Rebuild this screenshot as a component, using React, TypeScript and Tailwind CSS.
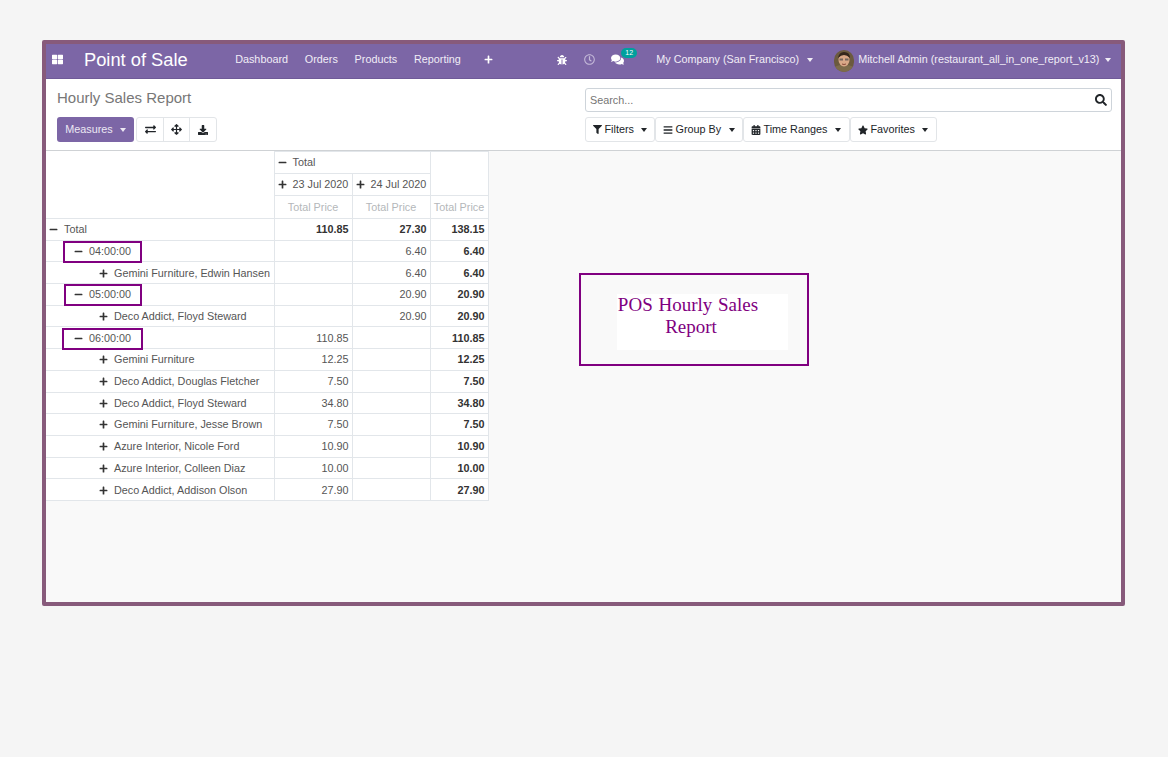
import { FaThLarge, FaPlus, FaMinus, FaExchangeAlt, FaArrowsAlt, FaDownload, FaBug, FaRegClock, FaComments, FaFilter, FaBars, FaCalendarAlt, FaStar, FaSearch } from 'react-icons/fa';

const navLinks = ['Dashboard', 'Orders', 'Products', 'Reporting'];

const rows = [
  { label: 'Total', level: 0, open: true, a: '110.85', b: '27.30', t: '138.15', bold: true },
  { label: '04:00:00', level: 1, open: true, a: '', b: '6.40', t: '6.40', box: 'w-[79px] top-0 h-[22px]' },
  { label: 'Gemini Furniture, Edwin Hansen', level: 2, a: '', b: '6.40', t: '6.40' },
  { label: '05:00:00', level: 1, open: true, a: '', b: '20.90', t: '20.90', box: 'w-[78px] ml-[1px] top-0 h-[22px]' },
  { label: 'Deco Addict, Floyd Steward', level: 2, a: '', b: '20.90', t: '20.90' },
  { label: '06:00:00', level: 1, open: true, a: '110.85', b: '', t: '110.85', box: 'w-[81px] -ml-[1px] top-[1px] h-[22px]' },
  { label: 'Gemini Furniture', level: 2, a: '12.25', b: '', t: '12.25' },
  { label: 'Deco Addict, Douglas Fletcher', level: 2, a: '7.50', b: '', t: '7.50' },
  { label: 'Deco Addict, Floyd Steward', level: 2, a: '34.80', b: '', t: '34.80' },
  { label: 'Gemini Furniture, Jesse Brown', level: 2, a: '7.50', b: '', t: '7.50' },
  { label: 'Azure Interior, Nicole Ford', level: 2, a: '10.90', b: '', t: '10.90' },
  { label: 'Azure Interior, Colleen Diaz', level: 2, a: '10.00', b: '', t: '10.00' },
  { label: 'Deco Addict, Addison Olson', level: 2, a: '27.90', b: '', t: '27.90' },
];

const indent = ['pl-[3px]', 'pl-[28px]', 'pl-[53px]'];

function Caret() {
  return <span className="inline-block w-0 h-0 border-x-[3.5px] border-x-transparent border-t-[4px] border-t-current align-middle" />;
}

function ToolButton({ icon, label, w }: { icon: React.ReactNode; label: string; w: string }) {
  return (
    <div className={`h-[25px] pl-[7px] flex items-center gap-[2.5px] bg-white border border-[#e2e5e8] rounded-[3px] text-[#212529] text-[10.8px] ${w}`}>
      {icon}
      <span>{label}</span>
      <span className="ml-[5px] mb-[2px]"><Caret /></span>
    </div>
  );
}

function Avatar() {
  return (
    <svg width="20" height="22" viewBox="0 0 20 22" className="rounded-full">
      <rect width="20" height="22" fill="#6b5a3e" />
      <path d="M0 22 V17 Q10 12 20 17 V22 Z" fill="#7d6b4a" />
      <ellipse cx="10" cy="10" rx="5.5" ry="6.5" fill="#d9a887" />
      <path d="M4 8 Q5 2 10 2 Q16 2 16 8 Q13 5 10 5 Q7 5 4 8 Z" fill="#33261c" />
      <rect x="5.5" y="8.5" width="3.5" height="2" fill="#4a4a4a" opacity="0.7" />
      <rect x="11" y="8.5" width="3.5" height="2" fill="#4a4a4a" opacity="0.7" />
      <path d="M8 14 Q10 15 12 14" stroke="#8a4a3a" strokeWidth="1" fill="none" />
    </svg>
  );
}

export default function App() {
  return (
    <div className="w-full h-[757px] bg-[#f5f5f5] pt-[40px] pl-[42px] font-['Liberation_Sans',Arial,sans-serif] overflow-hidden">
      <div className="w-[1083px] h-[566px] border-[4px] border-[#875a7b] bg-[#f9f9f9] flex flex-col rounded-[2px]">
        {/* navbar */}
        <div className="h-[35px] shrink-0 bg-[#7c66a6] border-b border-[#6f5a98] flex items-center pb-[3px] text-[#f1edf6] text-[10.8px]">
          <FaThLarge className="ml-[6px] text-white w-[11px] h-[11px]" />
          <span className="ml-[21px] text-[18.3px] text-white">Point of Sale</span>
          <div className="ml-[47.5px] flex gap-[16.8px]">
            {navLinks.map((l) => <span key={l}>{l}</span>)}
          </div>
          <FaPlus className="ml-[23.5px] text-white w-[9px] h-[9px]" />
          <FaBug className="ml-[64px] text-white w-[10px] h-[10px]" />
          <FaRegClock className="ml-[17px] text-[#c5bad9] w-[11px] h-[11px]" />
          <div className="ml-[16px] relative flex items-center">
            <FaComments className="text-white w-[13px] h-[13px]" />
            <span className="absolute left-[10px] -top-[5px] h-[10px] px-[4px] rounded-full bg-[#00a09d] text-white text-[7px] leading-[10px]">12</span>
          </div>
          <span className="ml-[32px]">My Company (San Francisco)</span>
          <span className="ml-[8px] mb-[2px]"><Caret /></span>
          <span className="ml-[21px] mt-[3px]"><Avatar /></span>
          <span className="ml-[4px]">Mitchell Admin (restaurant_all_in_one_report_v13)</span>
          <span className="ml-[6px] mb-[2px]"><Caret /></span>
        </div>

        {/* control panel */}
        <div className="h-[72px] shrink-0 bg-white border-b border-[#cfd2d5] flex justify-between pl-[11px] pr-[9px]">
          <div>
            <div className="mt-[9px] text-[15px] leading-[20px] text-[#777]">Hourly Sales Report</div>
            <div className="mt-[9px] flex items-center gap-[2px]">
              <div className="h-[25px] w-[77px] rounded-[3px] bg-[#7c66a6] text-[#ece8f3] text-[10.8px] flex items-center justify-center gap-[7px]">
                Measures <span className="mb-[2px]"><Caret /></span>
              </div>
              <div className="h-[25px] flex border border-[#e2e5e8] rounded-[3px] bg-white text-[#212529]">
                <div className="w-[27px] flex items-center justify-center border-r border-[#e2e5e8]"><FaExchangeAlt className="w-[11px] h-[11px]" /></div>
                <div className="w-[26px] flex items-center justify-center border-r border-[#e2e5e8]"><FaArrowsAlt className="w-[11px] h-[11px]" /></div>
                <div className="w-[26px] flex items-center justify-center"><FaDownload className="w-[10px] h-[10px]" /></div>
              </div>
            </div>
          </div>
          <div className="w-[527px]">
            <div className="mt-[9px] h-[24px] border border-[#ced4da] rounded-[3px] flex items-center justify-between px-[4px] text-[#757575] text-[10.8px]">
              <span>Search...</span>
              <FaSearch className="w-[12px] h-[12px] text-[#212529]" />
            </div>
            <div className="mt-[5px] flex">
              <ToolButton w="w-[70px]" icon={<FaFilter className="w-[9px] h-[9px]" />} label="Filters" />
              <ToolButton w="w-[88px]" icon={<FaBars className="w-[10px] h-[10px]" />} label="Group By" />
              <ToolButton w="w-[107px]" icon={<FaCalendarAlt className="w-[10px] h-[10px]" />} label="Time Ranges" />
              <ToolButton w="w-[87px]" icon={<FaStar className="w-[10px] h-[10px]" />} label="Favorites" />
            </div>
          </div>
        </div>

        {/* pivot + note */}
        <div className="flex-1 flex items-start">
          <table className="table-fixed border-collapse w-[442px] bg-white text-[10.8px] text-[#555]">
            <colgroup>
              <col className="w-[228px]" />
              <col className="w-[78px]" />
              <col className="w-[78px]" />
              <col className="w-[58px]" />
            </colgroup>
            <thead>
              <tr className="h-[22px]">
                <th rowSpan={2} className="border-r border-[#e2e6ea]" />
                <th colSpan={2} className="border border-[#e2e6ea] text-left font-normal pl-[3px]">
                  <FaMinus className="inline w-[9px] h-[9px] mr-[6px] text-[#333] align-[-1px]" />Total
                </th>
                <th rowSpan={2} className="border border-[#e2e6ea]" />
              </tr>
              <tr className="h-[22px]">
                <th className="border border-[#e2e6ea] text-left font-normal pl-[3px] whitespace-nowrap">
                  <FaPlus className="inline w-[9px] h-[9px] mr-[6px] text-[#333] align-[-1px]" />23 Jul 2020
                </th>
                <th className="border border-[#e2e6ea] text-left font-normal pl-[3px] whitespace-nowrap">
                  <FaPlus className="inline w-[9px] h-[9px] mr-[6px] text-[#333] align-[-1px]" />24 Jul 2020
                </th>
              </tr>
              <tr className="h-[23px]">
                <th className="border-r border-b border-[#e2e6ea]" />
                {[0, 1, 2].map((i) => (
                  <th key={i} className="border border-[#e2e6ea] font-normal text-center text-[#b4b7ba] whitespace-nowrap">Total Price</th>
                ))}
              </tr>
            </thead>
            <tbody>
              {rows.map((r, i) => (
                <tr key={i} className="h-[21.7px]">
                  <td className={`border-y border-r border-[#e2e6ea] whitespace-nowrap relative ${indent[r.level]}`}>
                    {r.box && <span className={`absolute left-[17px] border-2 border-[#800080] ${r.box}`} />}
                    {r.open
                      ? <FaMinus className="inline w-[9px] h-[9px] mr-[6px] text-[#333] align-[-1px]" />
                      : <FaPlus className="inline w-[9px] h-[9px] mr-[6px] text-[#333] align-[-1px]" />}
                    {r.label}
                  </td>
                  <td className={`border border-[#e2e6ea] text-right pr-[3px] ${r.bold ? 'font-bold text-[#333]' : ''}`}>{r.a}</td>
                  <td className={`border border-[#e2e6ea] text-right pr-[3px] ${r.bold ? 'font-bold text-[#333]' : ''}`}>{r.b}</td>
                  <td className="border border-[#e2e6ea] text-right pr-[3px] font-bold text-[#333]">{r.t}</td>
                </tr>
              ))}
            </tbody>
          </table>

          <div className="ml-[90px] mt-[122px] w-[230px] h-[93px] border-2 border-[#800080] pl-[36px] pt-[19px]">
            <div className="w-[171px] h-[56px] bg-white text-[#800080] text-[19px] leading-[22px] font-['Liberation_Serif',serif]">
              <div className="w-[149px] text-center">
                <span className="inline-block mr-[6px] whitespace-nowrap [word-spacing:1px]">POS Hourly Sales</span><br />Report
              </div>
            </div>
          </div>
        </div>
      </div>
    </div>
  );
}
